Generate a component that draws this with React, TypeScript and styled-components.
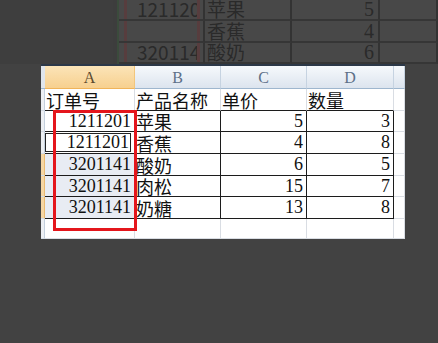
import React from "react";
import styled, { createGlobalStyle } from "styled-components";

export const GlobalStyle = createGlobalStyle`
  * { box-sizing: border-box; }
  html, body { margin: 0; padding: 0; background: #424242; overflow: hidden; }
`;

const serif = `"Liberation Serif", "Noto Sans CJK SC", serif`;
const cjk = `"Noto Sans CJK SC", "Liberation Sans", sans-serif`;

// 표 데이터
const dimRows = [
  ["1211201", "苹果", "5"],
  ["", "香蕉", "4"],
  ["3201141", "酸奶", "6"],
];

const rows = [
  ["1211201", "苹果", "5", "3"],
  ["1211201", "香蕉", "4", "8"],
  ["3201141", "酸奶", "6", "5"],
  ["3201141", "肉松", "15", "7"],
  ["3201141", "奶糖", "13", "8"],
];

const Page = styled.div`
  width: 438px;
  height: 343px;
  background: #424242;
`;

/* 위쪽 어둡게 처리된 배경 시트 */
const DimStrip = styled.div`
  display: flex;
  height: 64px;
  overflow: hidden;
`;

const DimGap = styled.div`
  width: 113px;
  background: #3e3e3e;
`;

const DimSheet = styled.div`
  flex: 1;
  display: grid;
  grid-template-columns: 4px 2px 86px 87px 88px 1fr;
  grid-template-rows: 21px 22px 21px;
  background: #484848;
`;

const DimHead = styled.div`
  background: #3d3d3d;
`;

const DimGreen = styled.div`
  background: #3b4b3c;
`;

const DimCell = styled.div<{ $num?: boolean; $first?: boolean }>`
  display: flex;
  align-items: flex-end;
  justify-content: ${(p) => (p.$num ? "flex-end" : "flex-start")};
  padding: ${(p) => (p.$first ? "0 3px 0 5px" : p.$num ? "0 4px 0 0" : "0 0 0 2px")};
  border-right: 2px solid #333;
  border-bottom: 2px solid #363636;
  font-family: ${(p) => (p.$num ? serif : cjk)};
  font-size: ${(p) => (p.$num ? "20px" : "19px")};
  line-height: 20px;
  overflow: hidden;
  white-space: nowrap;
  min-width: 0;
`;

const DimText = styled.span`
  flex-shrink: 0;
  color: #2a2a2a;
`;

const DimBox = styled.div`
  flex: 1;
  min-width: 0;
  align-self: stretch;
  display: flex;
  align-items: flex-end;
  border-left: 3px solid #573d3e;
  border-right: 3px solid #573d3e;
  padding-left: 10px;
  overflow: hidden;
`;

/* 엑셀 시트 */
const Sheet = styled.div`
  position: relative;
  margin-left: 41px;
  width: 364px;
  display: grid;
  grid-template-columns: 4px 90px 86px 86px 87px 11px;
  grid-template-rows: 23px 22px 21px 22px 22px 21px 22px 20px;
  border-top: 2px solid #2c3848;
  background: #fff;
`;

const Corner = styled.div`
  background: #dfe5ec;
  border-bottom: 1px solid #9eb6ce;
`;

const ColHead = styled.div<{ $sel?: boolean }>`
  display: flex;
  align-items: center;
  justify-content: center;
  background: ${(p) =>
    p.$sel
      ? "linear-gradient(#fbe4b8, #f7d08f)"
      : "linear-gradient(#f6f9fc, #dce4ee)"};
  border-right: 1px solid ${(p) => (p.$sel ? "#f2c67c" : "#c6d3e1")};
  border-bottom: 1px solid ${(p) => (p.$sel ? "#f0b45a" : "#9eb6ce")};
  color: ${(p) => (p.$sel ? "#5b4a2e" : "#5d7088")};
  font-family: ${serif};
  font-size: 16px;
  padding-top: 2px;
`;

const RowMark = styled.div<{ $sel?: boolean }>`
  background: ${(p) => (p.$sel ? "#f6d6a2" : "#eceff3")};
  border-right: 1px solid ${(p) => (p.$sel ? "#e9b970" : "#c4d0dd")};
  border-bottom: 1px solid #d3dbe4;
`;

const Cell = styled.div<{
  $num?: boolean;
  $right?: string;
  $bottom?: string;
  $shade?: boolean;
  $active?: boolean;
}>`
  display: flex;
  align-items: center;
  justify-content: ${(p) => (p.$num ? "flex-end" : "flex-start")};
  padding: ${(p) => (p.$active ? "1px 3px 1px 0" : p.$num ? "0 3px 0 0" : "0 0 0 1px")};
  background: ${(p) => (p.$shade ? "#e8ecf3" : "#fff")};
  border-right: 1px solid ${(p) => p.$right || "#d9dde3"};
  border-bottom: 1px solid ${(p) => p.$bottom || "#d9dde3"};
  color: #111;
  font-family: ${(p) => (p.$num ? serif : cjk)};
  font-size: 18px;
  white-space: nowrap;
  overflow: hidden;
`;

const ActiveBox = styled.span`
  flex: 1;
  align-self: stretch;
  display: flex;
  align-items: center;
  justify-content: flex-end;
  border: 1px solid #222;
  padding-right: 1px;
`;

const RedBox = styled.div`
  position: absolute;
  left: 12px;
  top: 44px;
  width: 84px;
  height: 121px;
  border: 3px solid #e4161c;
  pointer-events: none;
`;

const black = "#1c1c1c";

export default function App() {
  return (
    <>
      <GlobalStyle />
      <Page>
        <DimStrip>
          <DimGap />
          <DimSheet>
            {dimRows.map((r, i) => (
              <React.Fragment key={i}>
                <DimHead />
                <DimGreen />
                <DimCell $first>
                  <DimBox>
                    <DimText>{r[0]}</DimText>
                  </DimBox>
                </DimCell>
                <DimCell>
                  <DimText>{r[1]}</DimText>
                </DimCell>
                <DimCell $num>
                  <DimText>{r[2]}</DimText>
                </DimCell>
                <DimCell />
              </React.Fragment>
            ))}
          </DimSheet>
        </DimStrip>

        <Sheet>
          <Corner />
          <ColHead $sel>A</ColHead>
          <ColHead>B</ColHead>
          <ColHead>C</ColHead>
          <ColHead>D</ColHead>
          <ColHead />

          {/* 제목 행 */}
          <RowMark />
          <Cell $bottom={black}>订单号</Cell>
          <Cell $bottom={black}>产品名称</Cell>
          <Cell $bottom={black}>单价</Cell>
          <Cell $bottom={black}>数量</Cell>
          <Cell />

          {rows.map((r, i) => (
            <React.Fragment key={i}>
              <RowMark $sel={i >= 2} />
              <Cell $num $right={black} $bottom={black} $shade={i >= 2} $active={i === 1}>
                {i === 1 ? <ActiveBox>{r[0]}</ActiveBox> : r[0]}
              </Cell>
              <Cell $right={black} $bottom={black}>{r[1]}</Cell>
              <Cell $num $right={black} $bottom={black}>{r[2]}</Cell>
              <Cell $num $right={black} $bottom={black}>{r[3]}</Cell>
              <Cell />
            </React.Fragment>
          ))}

          <RowMark />
          <Cell />
          <Cell />
          <Cell />
          <Cell />
          <Cell />

          <RedBox />
        </Sheet>
      </Page>
    </>
  );
}
